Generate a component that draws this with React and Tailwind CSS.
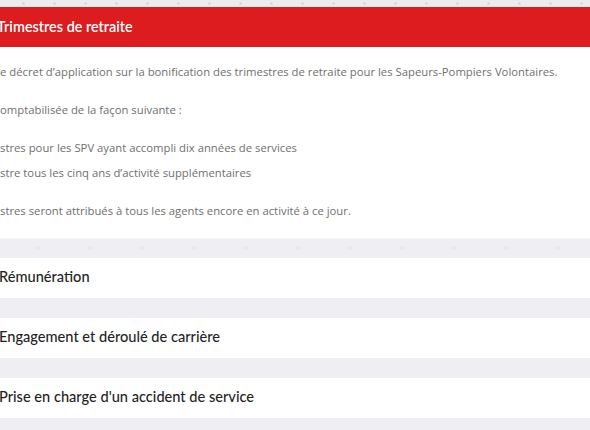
import React from 'react';

const rows = ['Rémunération', 'Engagement et déroulé de carrière', "Prise en charge d'un accident de service"];

function Row({ title }) {
  return (
    <div className="flex h-[40px] items-center bg-white pb-[2px]">
      <h3 className="-ml-[1px] text-[14.6px] font-medium text-[#1f1f1f] [font-family:'Lato',sans-serif]">{title}</h3>
    </div>
  );
}

export default function App() {
  return (
    <div className="h-[430px] w-[590px] overflow-hidden bg-[#efeff3]">
      <div className="h-[7px] bg-[#ececec] bg-[radial-gradient(circle,#d9d9d9_1.2px,transparent_1.6px)] bg-[length:31px_9px] bg-[position:8px_-1px]" />

      <section>
        <div className="flex h-[40px] items-center bg-[#dc1c1f]">
          <h2 className="-ml-[3px] text-[14.4px] font-semibold text-white [font-family:'Lato',sans-serif]">
            Trimestres de retraite
          </h2>
        </div>
        <div className="h-[191px] bg-white pt-[12px] text-[11.3px] leading-[25px] text-[#6f6f6f] [font-family:'Open_Sans',sans-serif]">
          <p>e décret d’application sur la bonification des trimestres de retraite pour les Sapeurs-Pompiers Volontaires.</p>
          <p className="mt-[13px]">omptabilisée de la façon suivante :</p>
          <ul className="mt-[13px]">
            <li>stres pour les SPV ayant accompli dix années de services</li>
            <li>stre tous les cinq ans d’activité supplémentaires</li>
          </ul>
          <p className="mt-[13px]">stres seront attribués à tous les agents encore en activité à ce jour.</p>
        </div>
      </section>

      <div className="h-[20px] border-t border-[#f7f6ea] bg-[radial-gradient(circle,#e2e2e6_1.2px,transparent_1.6px)] bg-[length:52px_14px] bg-[position:12px_2px]" />

      <div className="flex flex-col gap-[20px]">
        {rows.map((title) => (
          <Row key={title} title={title} />
        ))}
      </div>
    </div>
  );
}
